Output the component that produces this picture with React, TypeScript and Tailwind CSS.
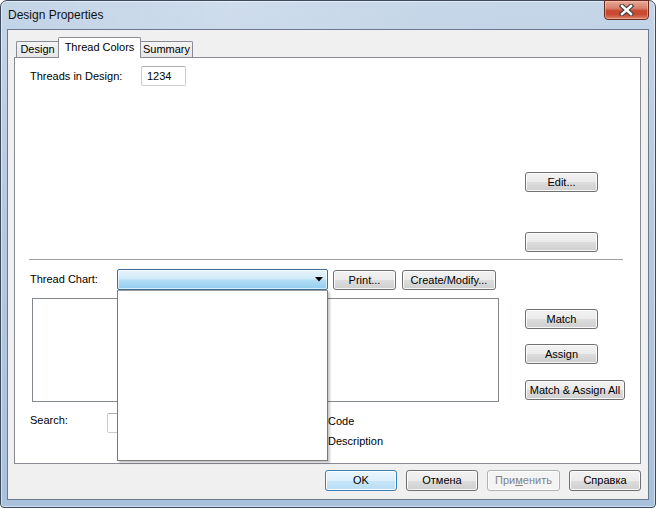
import React from "react";

type Kind = "normal" | "default" | "disabled";

function Btn({
  children,
  className = "",
  kind = "normal",
}: {
  children?: React.ReactNode;
  className?: string;
  kind?: Kind;
}) {
  const skin =
    kind === "default"
      ? "border-[#3c7fb1] bg-[linear-gradient(#eaf5fd,#dcf0fc_50%,#c8e6fa_50%,#b9ddf5)] shadow-[inset_0_0_0_1px_rgba(255,255,255,0.9)]"
      : kind === "disabled"
      ? "border-[#adb2b5] bg-[#f4f4f4] text-[#838383] shadow-[inset_0_0_0_1px_#fcfcfc]"
      : "border-[#707070] bg-[linear-gradient(#f2f2f2,#ebebeb_50%,#dddddd_50%,#cfcfcf)] shadow-[inset_0_0_0_1px_rgba(255,255,255,0.85)]";
  return (
    <div
      className={`flex shrink-0 items-center justify-center rounded-[3px] border text-[11px] leading-none ${skin} ${className}`}
    >
      {children}
    </div>
  );
}

function CloseButton() {
  return (
    <div className="relative -mt-px flex h-[20px] w-[45px] items-center justify-center rounded-b-[4px] border border-[#6b2a20] bg-[linear-gradient(#e9a998,#d8816c_40%,#c6472f_55%,#c94b32_75%,#e0836a)] shadow-[inset_0_0_0_1px_rgba(255,210,200,0.45)]">
      <svg width="15" height="12" viewBox="0 0 15 12">
        <path d="M3 2 L12 10 M12 2 L3 10" stroke="#3e3e3e" strokeWidth="4.6" strokeLinecap="square" />
        <path d="M3 2 L12 10 M12 2 L3 10" stroke="#ffffff" strokeWidth="2.4" strokeLinecap="square" />
      </svg>
    </div>
  );
}

function TextBox({ className = "", children }: { className?: string; children?: React.ReactNode }) {
  return (
    <div
      className={`flex shrink-0 items-center rounded-[2px] border border-[#c9ccd2] border-t-[#abadb3] bg-white pl-[5px] ${className}`}
    >
      {children}
    </div>
  );
}

function Radio({ label }: { label: string }) {
  return (
    <div className="flex h-[20px] items-center gap-[2px]">
      <div className="h-[13px] w-[13px] rounded-full border border-[#8e8f8f] bg-[linear-gradient(#e6e6e6,#ffffff)]" />
      <span>{label}</span>
    </div>
  );
}

export default function App() {
  return (
    <div className="h-[508px] w-[656px] bg-white font-['Liberation_Sans',Arial,sans-serif] text-[11px] leading-[13px] text-black">
      <div className="flex h-full w-full flex-col rounded-t-[7px] rounded-b-[4px] border border-[#3d4a5b] bg-[linear-gradient(#c4d5e8,#b7cbe2_35%,#a8c1dd)] shadow-[inset_0_0_0_1px_rgba(255,255,255,0.5)]">
        {/* title bar */}
        <div className="flex h-[28px] shrink-0 items-start justify-between rounded-t-[6px] bg-[linear-gradient(to_right,rgba(255,255,255,0),rgba(255,255,255,0.18)_35%,rgba(255,255,255,0.05)_65%,rgba(255,255,255,0))] pl-[7px] pr-[6px]">
          <span className="mt-[7px] text-[12px] leading-[15px] text-[#111]">Design Properties</span>
          <CloseButton />
        </div>

        {/* client area */}
        <div className="mx-[6px] flex h-[471px] shrink-0 flex-col border border-[#6a798b] bg-[#f0f0f0]">
          {/* tabs */}
          <div className="relative z-10 -mb-px mt-[7px] flex h-[21px] items-end pl-[8px]">
            <div className="mb-px flex h-[16px] w-[42px] items-center justify-center rounded-tl-[2px] border border-b-0 border-r-0 border-[#898c95] bg-[linear-gradient(#f4f4f4,#e6e6e6)]">
              Design
            </div>
            <div className="flex h-[21px] w-[83px] items-center justify-center rounded-t-[2px] border border-b-0 border-[#898c95] bg-white pb-[1px]">
              Thread Colors
            </div>
            <div className="mb-px flex h-[16px] w-[52px] items-center justify-center rounded-tr-[2px] border border-b-0 border-l-0 border-[#898c95] bg-[linear-gradient(#f4f4f4,#e6e6e6)]">
              Summary
            </div>
          </div>

          {/* tab page */}
          <div className="ml-[6px] flex h-[407px] w-[627px] flex-col border border-[#898c95] bg-white">
            <div className="flex h-[201px] shrink-0">
              <div className="flex items-start pl-[15px] pt-[8px]">
                <div className="flex h-[20px] w-[111px] items-center">Threads in Design:</div>
                <TextBox className="h-[20px] w-[45px]">1234</TextBox>
              </div>
              <div className="ml-auto mr-[42px] flex flex-col pt-[114px]">
                <Btn className="h-[20px] w-[73px]">Edit...</Btn>
                <Btn className="mt-[40px] h-[20px] w-[73px]" />
              </div>
            </div>

            <div className="ml-[14px] h-px w-[594px] shrink-0 bg-[#a0a0a0]" />

            {/* thread chart row */}
            <div className="mt-[9px] flex h-[21px] items-end pl-[15px]">
              <div className="flex h-[21px] w-[87px] items-center">Thread Chart:</div>
              <div className="relative h-[21px] w-[211px] shrink-0">
                <div className="flex h-full w-full items-center justify-end rounded-[2px] border border-[#3f6f98] bg-[linear-gradient(#e6f4fd,#d2ebfa_45%,#b1dcf5_55%,#93cdee)] pr-[4px] shadow-[inset_0_0_0_1px_rgba(255,255,255,0.6)]">
                  <svg width="8" height="5" viewBox="0 0 8 5">
                    <path d="M0 0 H8 L4 4.5 Z" fill="#000" />
                  </svg>
                </div>
                <div className="absolute left-0 top-full z-30 h-[171px] w-[211px] border border-[#7a7a7a] border-t-[#9a9a9a] bg-white shadow-[2px_2px_2px_rgba(0,0,0,0.22)]" />
              </div>
              <Btn className="ml-[5px] h-[20px] w-[63px]">Print...</Btn>
              <Btn className="ml-[6px] h-[20px] w-[94px]">Create/Modify...</Btn>
            </div>

            {/* chart list and actions */}
            <div className="mt-[8px] flex">
              <div className="ml-[17px] h-[104px] w-[467px] shrink-0 border border-[#828790] bg-white" />
              <div className="ml-[26px] flex flex-col items-start pt-[11px]">
                <Btn className="h-[20px] w-[73px]">Match</Btn>
                <Btn className="mt-[15px] h-[20px] w-[73px]">Assign</Btn>
                <Btn className="mt-[16px] h-[20px] w-[100px]">Match &amp; Assign All</Btn>
              </div>
            </div>

            {/* search row */}
            <div className="mt-[11px] flex items-start pl-[15px]">
              <div className="flex h-[15px] w-[77px] items-center">Search:</div>
              <TextBox className="h-[20px] w-[160px]" />
              <div className="-mt-[2px] ml-[46px] flex flex-col">
                <Radio label="Code" />
                <Radio label="Description" />
              </div>
            </div>
          </div>

          {/* dialog buttons */}
          <div className="mt-[6px] flex justify-end gap-[9px] pr-[7px]">
            <Btn kind="default" className="h-[21px] w-[72px]">
              OK
            </Btn>
            <Btn className="h-[21px] w-[72px]">Отмена</Btn>
            <Btn kind="disabled" className="h-[21px] w-[73px]">
              При<span className="underline">м</span>енить
            </Btn>
            <Btn className="h-[21px] w-[72px]">Справка</Btn>
          </div>
        </div>
      </div>
    </div>
  );
}
